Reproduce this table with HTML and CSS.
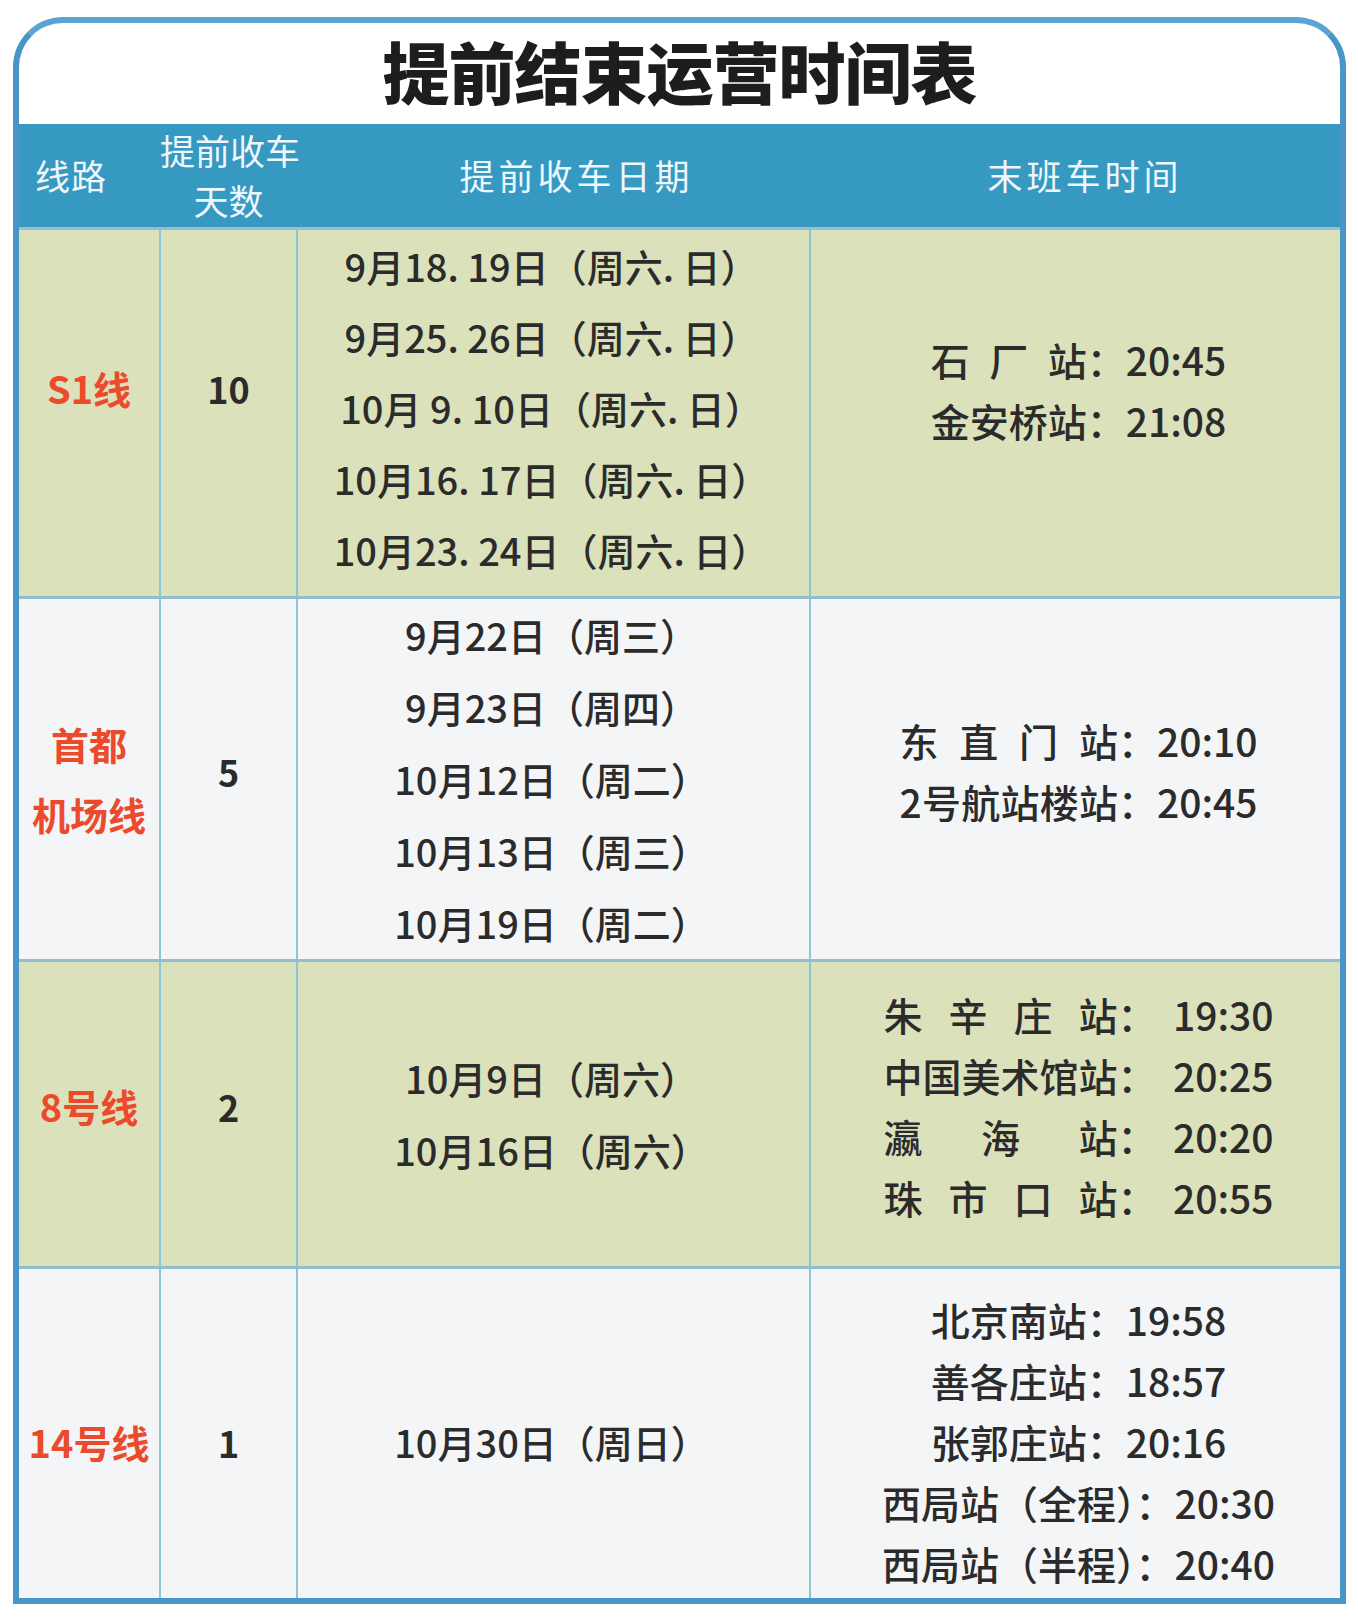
FILE: index.html
```html
<!DOCTYPE html>
<html lang="zh-CN">
<head>
<meta charset="utf-8">
<title>提前结束运营时间表</title>
<link rel="stylesheet" href="styles.css">
</head>
<body>
<div class="sheet">
  <h1 class="title">提前结束运营时间表</h1>
  <table class="grid">
    <colgroup>
      <col class="c-line">
      <col class="c-days">
      <col class="c-dates">
      <col class="c-times">
    </colgroup>
    <thead>
      <tr class="head">
        <th class="h-line">线路</th>
        <th class="h-days"><div>提前收车</div><div>天数</div></th>
        <th class="h-dates">提前收车日期</th>
        <th class="h-times">末班车时间</th>
      </tr>
    </thead>
    <tbody>
      <tr class="row green r1">
        <td class="line">S1线</td>
        <td class="days">10</td>
        <td class="dates">
          <div>9月18. 19日（周六. 日）</div>
          <div>9月25. 26日（周六. 日）</div>
          <div>10月 9. 10日（周六. 日）</div>
          <div>10月16. 17日（周六. 日）</div>
          <div>10月23. 24日（周六. 日）</div>
        </td>
        <td class="times">
          <div class="tl"><span class="lab w4">石厂站</span><span>：20:45</span></div>
          <div class="tl"><span class="lab w4">金安桥站</span><span>：21:08</span></div>
        </td>
      </tr>
      <tr class="row grey r2">
        <td class="line"><div>首都</div><div>机场线</div></td>
        <td class="days">5</td>
        <td class="dates">
          <div>9月22日（周三）</div>
          <div>9月23日（周四）</div>
          <div>10月12日（周二）</div>
          <div>10月13日（周三）</div>
          <div>10月19日（周二）</div>
        </td>
        <td class="times">
          <div class="tl"><span class="lab w55">东直门站</span><span>：20:10</span></div>
          <div class="tl"><span class="lab w55">2号航站楼站</span><span>：20:45</span></div>
        </td>
      </tr>
      <tr class="row green r3">
        <td class="line">8号线</td>
        <td class="days">2</td>
        <td class="dates">
          <div>10月9日（周六）</div>
          <div>10月16日（周六）</div>
        </td>
        <td class="times">
          <div class="tl"><span class="lab w6">朱辛庄站</span><span class="colon">：</span><span class="tm">19:30</span></div>
          <div class="tl"><span class="lab w6">中国美术馆站</span><span class="colon">：</span><span class="tm">20:25</span></div>
          <div class="tl"><span class="lab w6">瀛海站</span><span class="colon">：</span><span class="tm">20:20</span></div>
          <div class="tl"><span class="lab w6">珠市口站</span><span class="colon">：</span><span class="tm">20:55</span></div>
        </td>
      </tr>
      <tr class="row grey r4">
        <td class="line">14号线</td>
        <td class="days">1</td>
        <td class="dates">
          <div>10月30日（周日）</div>
        </td>
        <td class="times">
          <div>北京南站：19:58</div>
          <div>善各庄站：18:57</div>
          <div>张郭庄站：20:16</div>
          <div>西局站（全程）：20:30</div>
          <div>西局站（半程）：20:40</div>
        </td>
      </tr>
    </tbody>
  </table>
</div>
</body>
</html>
```

FILE: styles.css
```css
html, body {
  margin: 0;
  padding: 0;
  background: #ffffff;
}

body {
  font-family: "Noto Sans CJK SC", "Noto Sans", sans-serif;
  color: #2b2b2b;
}

.sheet {
  box-sizing: border-box;
  width: 1333px;
  margin: 17px 0 0 13px;
  border: 6px solid #4896c8;
  border-top-color: #5aa3d4;
  border-radius: 50px 50px 0 0;
  background: #ffffff;
  overflow: hidden;
}

.title {
  margin: 0;
  height: 101px;
  line-height: 94px;
  text-align: center;
  font-size: 67px;
  font-weight: 900;
  letter-spacing: -1px;
  color: #1d1d1d;
}

.grid {
  width: 100%;
  border-collapse: collapse;
  table-layout: fixed;
}

.c-line { width: 141px; }
.c-days { width: 137px; }
.c-dates { width: 513px; }

.head {
  height: 104px;
}

.head th {
  background: #3699c2;
  color: #eef7fb;
  font-weight: 400;
  font-size: 35px;
  padding: 0;
  border: none;
  vertical-align: middle;
  line-height: 50px;
  white-space: nowrap;
}

.head .h-line { text-align: left; padding-left: 16px; letter-spacing: 1px; }
.head .h-days { letter-spacing: 0; }
.head .h-dates { padding-left: 46px; letter-spacing: 4px; }
.head .h-times { padding-left: 20px; letter-spacing: 4px; }

.row td {
  padding: 0;
  text-align: center;
  vertical-align: middle;
  border-left: 2px solid #8cc6d6;
  border-right: 2px solid #8cc6d6;
  border-top: 3px solid #92bfcf;
  font-size: 38px;
  font-weight: 500;
  color: #2b2b2b;
  white-space: nowrap;
}

.row td:first-child { border-left: none; }
.row td:last-child { border-right: none; }

.green td { background: #dbe1ba; }
.grey td { background: #f3f5f7; }

.r1 { height: 369px; }
.r2 { height: 363px; }
.r3 { height: 307px; }
.r4 { height: 331px; }

.row .line {
  color: #ec4a2c;
  font-weight: 700;
  font-size: 38px;
  line-height: 70px;
}

.row .days {
  font-weight: 700;
  font-size: 36px;
}

.row .dates {
  line-height: 72px;
  padding-right: 4px;
}

.dates div {
  white-space: pre;
}

.row .times {
  font-size: 39px;
  line-height: 61px;
  padding-left: 6px;
}

/* per-row vertical nudges to match the reference */
.r1 .line, .r1 .days { padding-bottom: 49px; }
.r1 .dates { line-height: 71px; padding-bottom: 11px; }
.r1 .times { padding-bottom: 45px; }

.r2 .days, .r2 .times { padding-bottom: 15px; }

.r3 .line, .r3 .days { padding-bottom: 16px; }
.r3 .times { padding-bottom: 15px; }

.r4 td { padding-top: 17px; }

.tl {
  display: flex;
  justify-content: center;
}

.lab {
  display: inline-block;
  text-align: justify;
  text-align-last: justify;
}

.w4 { width: 4em; }
.w55 { width: 5.6em; }
.w6 { width: 6em; }

.tm {
  display: inline-block;
  width: 3em;
  text-align: right;
}
```
